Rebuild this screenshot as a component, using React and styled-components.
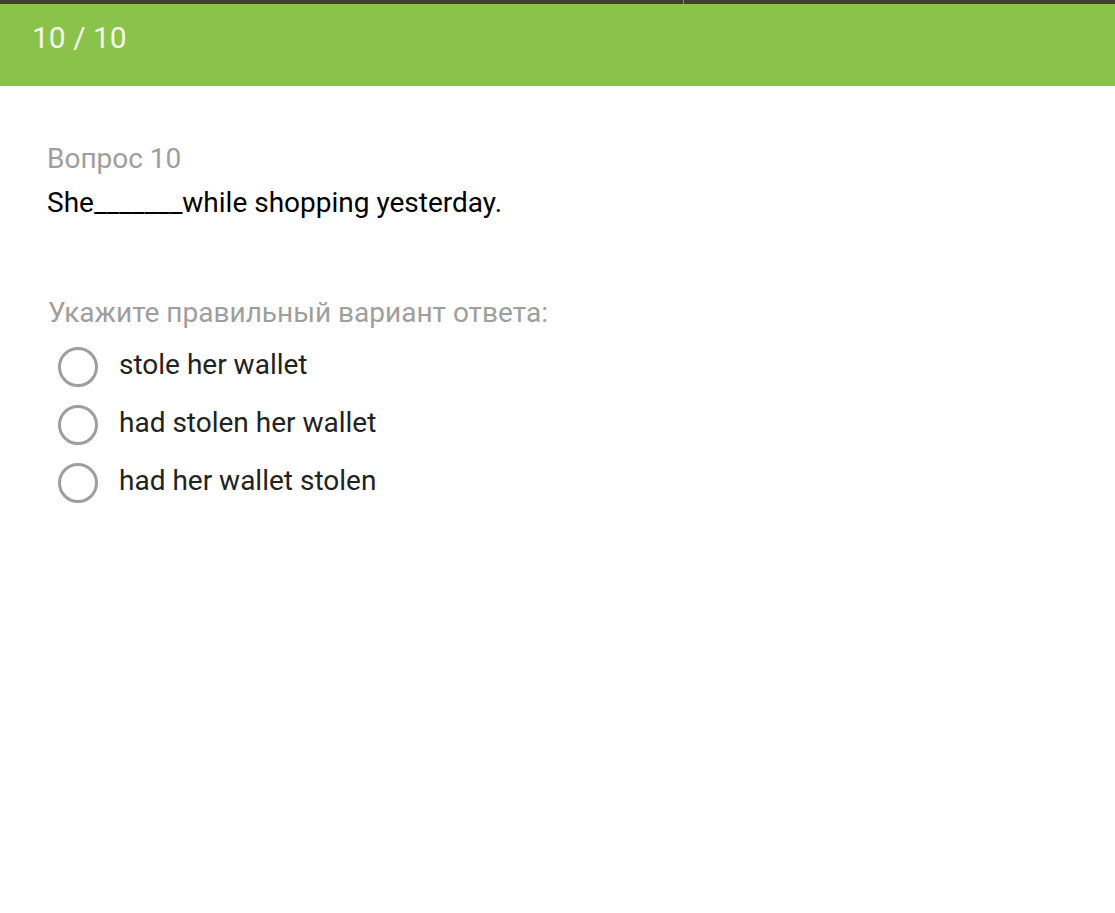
import React from 'react'
import styled, {createGlobalStyle} from 'styled-components'

const GlobalStyle = createGlobalStyle`
  body {
    margin: 0;
    background: #fff;
    font-family: Roboto, "Noto Sans", sans-serif;
  }
`

const TopStrip = styled.div`
  display: flex;
  height: 4px;
  background: #3f3f2f;
`

const StripPart = styled.div`
  width: ${p => p.width || 'auto'};
  flex: ${p => (p.width ? 'none' : 1)};
  border-left: ${p => (p.divider ? '1px solid #8a8a80' : 'none')};
`

const Header = styled.header`
  height: 82px;
  background: #8bc34a;
  color: #f3f8ec;
  font-size: 30px;
  line-height: 1;
  padding: 19px 0 0 32px;
  box-sizing: border-box;
`

const Content = styled.main`
  padding: 51px 0 0 47px;
`

const QuestionNumber = styled.div`
  color: #9e9e9e;
  font-size: 28px;
  line-height: 44px;
`

const QuestionText = styled.div`
  color: #000;
  font-size: 28px;
  line-height: 44px;
`

const Hint = styled.div`
  margin-top: 66px;
  color: #9e9e9e;
  font-size: 28px;
  line-height: 44px;
  padding-left: 1px;
`

const Options = styled.div`
  display: flex;
  flex-direction: column;
  margin-top: 3px;
`

const Option = styled.label`
  display: flex;
  align-items: center;
  height: 58px;
  padding-left: 11px;
  cursor: pointer;
`

const Radio = styled.span`
  width: 40px;
  height: 40px;
  box-sizing: border-box;
  border: 3px solid #9e9e9e;
  border-radius: 50%;
  flex: none;
`

const OptionText = styled.span`
  margin: 0 0 5px 21px;
  color: #222;
  font-size: 28px;
  line-height: 1;
`

const options = ['stole her wallet', 'had stolen her wallet', 'had her wallet stolen']

const App = () => (
  <>
    <GlobalStyle />
    <TopStrip>
      <StripPart width="683px" />
      <StripPart divider />
    </TopStrip>
    <Header>10 / 10</Header>
    <Content>
      <QuestionNumber>Вопрос 10</QuestionNumber>
      <QuestionText>She_______while shopping yesterday.</QuestionText>
      <Hint>Укажите правильный вариант ответа:</Hint>
      <Options>
        {options.map(o => (
          <Option key={o}>
            <Radio />
            <OptionText>{o}</OptionText>
          </Option>
        ))}
      </Options>
    </Content>
  </>
)

export default App
